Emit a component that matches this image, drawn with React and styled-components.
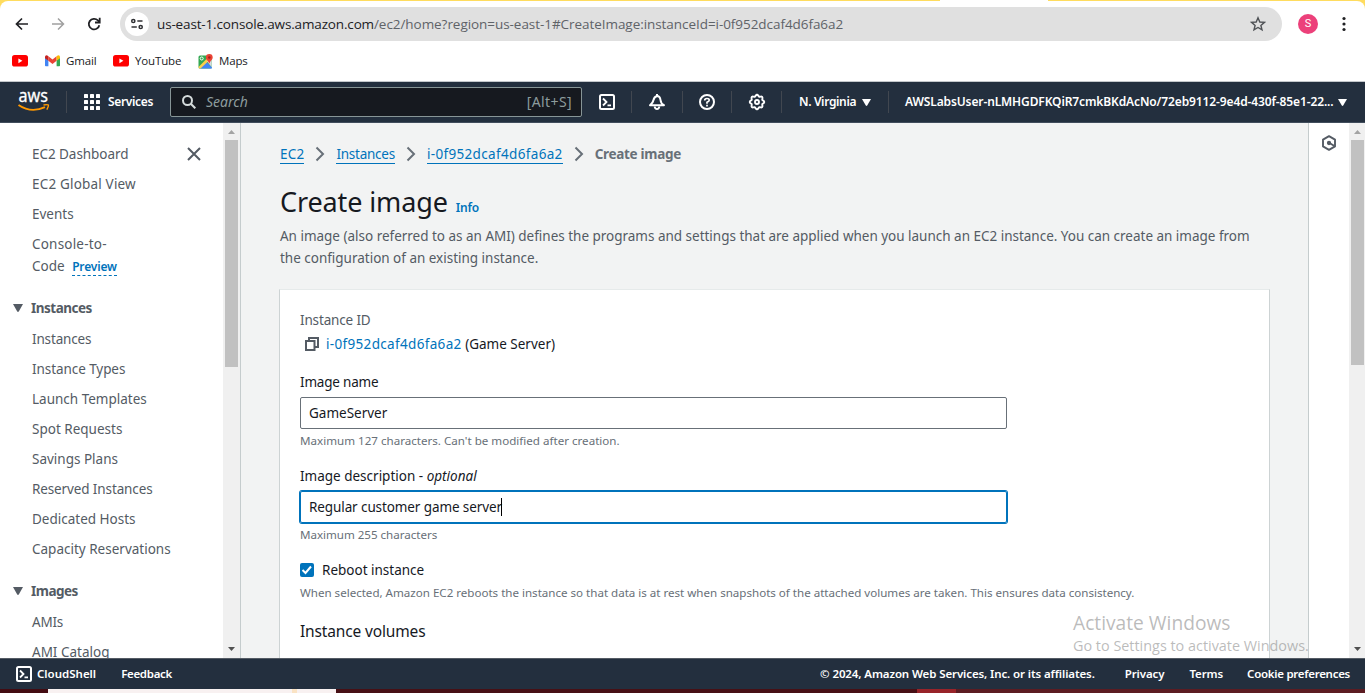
import React from "react";
import styled, { createGlobalStyle, css } from "styled-components";

const Global = createGlobalStyle`
  * { box-sizing: border-box; }
  html, body { margin: 0; padding: 0; overflow: hidden; }
  body {
    width: 1365px; height: 693px;
    font-family: "Noto Sans", "Open Sans", sans-serif;
    font-size: 14px; line-height: 22px; color: #16191f;
  }
`;

const ls = css`letter-spacing: ${(p) => p.$ls || 0}px;`;

const Page = styled.div`
  display: flex; flex-direction: column; width: 1365px; height: 693px; overflow: hidden; background: #fff;
  position: relative;
`;

/* Browser chrome */
const TabEdge = styled.div`
  height: 1px; flex: none;
  background: linear-gradient(to right, #ffdc5e 940px, #fff 940px, #fff 1048px, #ffdc5e 1048px);
`;
const ChromeBack = styled.div`background: #ffdc5e; flex: none;`;
const Chrome = styled.div`
  height: 80px; background: #fff; border-radius: 8px 8px 0 0;
  font-family: "Open Sans", "Noto Sans", sans-serif; color: #202124;
`;
const Toolbar = styled.div`display: flex; align-items: center; height: 46px; padding-left: 13px;`;
const ToolIcon = styled.svg`display: block; width: 18px; height: 18px; margin-right: 18px; flex: none;`;
const UrlBar = styled.div`
  display: flex; align-items: center; width: 1162px; height: 34px; border-radius: 17px; margin-left: -1px;
  background: #e0e0e0; padding: 0 16px 0 5px; font-size: 13.5px; color: #5f6368;
  & > svg { margin-left: auto; }
`;
const SiteInfo = styled.span`
  display: flex; align-items: center; justify-content: center; width: 24px; height: 24px;
  background: #fff; border-radius: 50%; margin-right: 8px; flex: none;
`;
const Host = styled.span`color: #202124; letter-spacing: -0.15px;`;
const Path = styled.span`letter-spacing: -0.055px;`;
const Avatar = styled.div`
  width: 20px; height: 20px; border-radius: 50%; background: #ec407a; color: #fff;
  font: 11px/20px Roboto, sans-serif; text-align: center; margin-left: 16px;
`;
const Dots = styled.svg`width: 4px; height: 16px; margin-left: 24px;`;
const Bookmarks = styled.div`display: flex; align-items: center; height: 28px; padding-left: 12px;`;
const Bookmark = styled.div`
  display: flex; align-items: center; font-size: 11.5px; letter-spacing: -0.15px;
  gap: 6px; width: ${(p) => p.$w}px; flex: none; white-space: nowrap;
`;

/* Console navigation */
const Nav = styled.div`
  display: flex; align-items: center; flex: none; height: 42px; background: #232f3e;
  border-top: 1px solid #c3c7cb; border-bottom: 1px solid #414d5c; color: #fff;
  font-size: 12px; font-weight: 600;
`;
const NavItem = styled.div`
  display: flex; align-items: center; flex: none; height: 22px; width: ${(p) => p.$w}px;
  padding-left: ${(p) => p.$pl || 0}px; justify-content: ${(p) => (p.$center ? "center" : "flex-start")};
  border-right: ${(p) => (p.$line ? "1px solid #414750" : "0")}; white-space: nowrap; gap: ${(p) => p.$gap || 0}px;
  & > svg { flex: none; overflow: visible; }
`;
const NavText = styled.span`${ls}`;
const Search = styled.div`
  display: flex; align-items: center; width: 412px; height: 30px; flex: none; background: #16191f;
  border: 1px solid #879596; border-radius: 2px; padding: 0 9px 0 11px; gap: 10px;
  font-size: 14px; font-weight: 400; color: #8d9c9d;
`;
const Placeholder = styled.em`flex: 1; ${ls}`;

/* Body */
const Body = styled.div`display: flex; height: 535px; flex: none;`;
const Side = styled.div`
  width: 223px; height: 535px; overflow: hidden; padding: 16px 0 0 32px; color: #545b64; flex: none; position: relative;
`;
const SideLink = styled.div`padding: 4px 0; font-size: 13.5px; white-space: nowrap; ${ls}`;
const Preview = styled.span`
  color: #0073bb; font-size: 12px; font-weight: 600; border-bottom: 1px dashed #0073bb; margin-left: 4px;
  line-height: 17px; display: inline-block; ${ls}
`;
const SideHead = styled.div`
  display: flex; align-items: center; gap: 8px; margin: 16px 0 5px -19px; font-size: 13.5px; font-weight: 700; height: 22px;
  letter-spacing: -0.5px;
`;
const CloseIcon = styled.svg`position: absolute; left: 187px; top: 24px;`;
const Scroll = styled.div`
  display: flex; flex-direction: column; align-items: center; flex: none; width: ${(p) => p.$w}px; height: 535px;
  background: #f0f0f0; padding-top: 7px; padding-bottom: 7px;
`;
const Thumb = styled.div`width: 13px; height: ${(p) => p.$h}px; background: #c1c1c1; margin-top: 6px;`;
const Arrow = styled.svg`display: block; flex: none; margin-top: ${(p) => (p.$end ? "auto" : "0")};`;

const Main = styled.div`
  width: 1069px; flex: none; background: #f2f3f3; border-left: 1px solid #c5cccd; border-right: 1px solid #c5cccd;
  height: 535px; overflow: hidden; padding: 20px 38px 0 38px;
`;
const Crumbs = styled.div`display: flex; align-items: center; height: 22px; font-size: 13.5px; white-space: nowrap; padding-left: 1px;`;
const Crumb = styled.span`
  color: #0073bb; line-height: 18px; border-bottom: 1px solid #0073bb; margin-right: 11px; ${ls}
`;
const CrumbArrow = styled.svg`margin-right: 11px; flex: none;`;
const CrumbNow = styled.span`color: #687078; font-weight: 700; ${ls}`;
const TitleRow = styled.div`display: flex; align-items: baseline; height: 36px; margin: 19px 0 0 1px; white-space: nowrap;`;
const Title = styled.h1`margin: 0; font-size: 27px; font-weight: 400; line-height: 36px; ${ls}`;
const Info = styled.span`color: #0073bb; font-size: 12px; font-weight: 600; margin-left: 8px; ${ls}`;
const Lead = styled.div`color: #545b64; font-size: 13.5px; margin: 5px 0 0 1px; white-space: nowrap; ${ls}`;
const Card = styled.div`
  margin-top: 20px; height: 420px; background: #fff; border: 1px solid #cdd3d4; border-top-color: #e6eaea; padding: 19px 20px 0;
`;
const Label = styled.div`
  font-size: 13.5px; height: 22px; white-space: nowrap; color: ${(p) => (p.$muted ? "#545b64" : "#16191f")};
  margin-top: ${(p) => p.$mt || 0}px; display: flex; align-items: center; ${ls}
`;
const Text = styled.span`white-space: pre; ${ls}`;
const Link = styled(Text)`color: #0073bb;`;
const Field = styled.div`
  display: flex; align-items: center; width: 707px; height: 32px; margin-top: 4px; padding-left: 8px;
  border: 1px solid ${(p) => (p.$focus ? "#0073bb" : "#687078")}; border-radius: 2px; font-size: 13.5px;
  box-shadow: ${(p) => (p.$focus ? "0 0 0 1px #0073bb" : "none")};
`;
const Caret = styled.span`width: 1px; height: 18px; background: #000; margin-left: -1px;`;
const Hint = styled.div`font-size: 11.6px; line-height: 18px; height: 18px; margin-top: 3px; color: #687078; white-space: nowrap; ${ls}`;
const Check = styled.span`
  width: 14px; height: 14px; background: #0073bb; border-radius: 2px; margin-right: 8px; display: flex;
`;
const Section = styled.div`font-size: 15.5px; line-height: 22px; margin-top: 18px; ${ls}`;
const Tools = styled.div`width: 40px; flex: none; padding: 12px 0 0 12px;`;

/* Footer */
const Footer = styled.div`
  display: flex; align-items: center; height: 31px; flex: none; background: #232f3e; border-top: 1px solid #545b64;
  color: #fff; font-size: 11.5px; font-weight: 600; padding: 0 15px 0 16px; white-space: nowrap;
`;
const FootText = styled.span`margin-left: ${(p) => p.$ml}; ${ls}`;
const Taskbar = styled.div`
  height: 4px; flex: none;
  background: linear-gradient(to right, #430c12 48px, #f8f1f1 48px 292px, #fae3c4 292px 297px, #f8f1f1 297px 336px, #471015 336px 917px, #982329 917px 956px, #5c1c22 956px);
`;
const Watermark = styled.div`
  position: absolute; left: 1073px; top: 609px; color: rgba(120,120,120,0.5); font-family: "Open Sans", sans-serif;
  white-space: nowrap;
`;
const WmTitle = styled.div`font-size: 19.2px; line-height: 28px; ${ls}`;
const WmText = styled.div`font-size: 14.4px; line-height: 18px; ${ls}`;

const YouTube = () => (
  <svg width="16" height="12" viewBox="0 0 16 12"><rect width="16" height="11.5" rx="2.6" fill="#f00" /><path d="M6.4 3.4v4.8l4-2.4z" fill="#fff" /></svg>
);
const Gmail = () => (
  <svg width="15" height="12" viewBox="0 0 15 12">
    <path d="M0 2v8.5q0 .8.8.8h2.6V5.2z" fill="#4285f4" />
    <path d="M15 2v8.5q0 .8-.8.8h-2.6V5.2z" fill="#34a853" />
    <path d="M3.4 1.3v4.5L7.5 8.9l4.1-3.1V1.3L7.5 4.4z" fill="#ea4335" />
    <path d="M0 1.8Q.2-.2 2.3.4l1.1.9v4.5L0 3.3z" fill="#c5221f" />
    <path d="M15 1.8Q14.8-.2 12.7.4l-1.1.9v4.5L15 3.3z" fill="#fbbc04" />
  </svg>
);
const Maps = () => (
  <svg width="15" height="15" viewBox="0 0 15 15">
    <rect x=".5" y="1.5" width="13" height="13" rx="1.5" fill="#34a853" />
    <path d="M1 14.5 8 7.5l6 6v1z" fill="#4285f4" />
    <path d="M.5 13 9 4.5l2 2-8.5 8H1z" fill="#fbd04b" />
    <path d="M9 7.5 13.500 5v8z" fill="#d7dbe0" />
    <circle cx="3.7" cy="4.5" r="1.5" fill="none" stroke="#fff" />
    <path d="M11.3 0a3.4 3.4 0 0 1 3.4 3.4c0 2.2-2.5 3.3-3.4 6.300C10.4 6.7 7.900 5.600 7.900 3.400A3.400 3.400 0 0 1 11.300 0z" fill="#ea4335" />
    <circle cx="11.3" cy="3.5" r="1.2" fill="#a11f18" />
  </svg>
);
const Shell = () => (
  <svg width="16" height="16" viewBox="0 0 16 16" fill="none" stroke="#fff" strokeWidth="2">
    <rect x="1" y="1" width="14" height="14" rx="1.5" /><path d="M4 4.5 7.5 8 4 11.500M8.500 11.300h3.500" strokeWidth="1.8" />
  </svg>
);
const Down = ({ w = 9, h = 7, color = "#fff" }) => (
  <svg width={w} height={h} viewBox="0 0 9 7"><path d="M0 0h9L5.2 6.6q-.7.8-1.4 0z" fill={color} /></svg>
);
const Chevron = () => (
  <CrumbArrow width="10" height="16" viewBox="0 0 10 16" fill="none" stroke="#687078" strokeWidth="2"><path d="M1.5 1.5 8 8l-6.5 6.5" /></CrumbArrow>
);
const ScrollBar = ({ w, h }) => (
  <Scroll $w={w}>
    <Arrow width="7" height="4" viewBox="0 0 7 4"><path d="M0 4h7L3.5 0z" fill="#a3a3a3" /></Arrow>
    <Thumb $h={h} />
    <Arrow $end width="7" height="4" viewBox="0 0 7 4"><path d="M0 0h7L3.5 4z" fill="#505050" /></Arrow>
  </Scroll>
);

/* Scalloped outline of the settings icon: eight lobes around the centre */
const gearPath = Array.from({ length: 65 }, (_, i) => {
  const a = (i / 64) * Math.PI * 2;
  const r = 6.5 + 0.75 * Math.cos(8 * a);
  return `${i ? "L" : "M"}${(9 + r * Math.cos(a)).toFixed(2)} ${(9 + r * Math.sin(a)).toFixed(2)}`;
}).join("") + "Z";

export default function App() {
  return (
    <Page>
      <Global />
      <TabEdge />
      <ChromeBack>
        <Chrome>
          <Toolbar>
            <ToolIcon viewBox="0 0 18 18" fill="none" stroke="#202124" strokeWidth="1.7"><path d="M15 9H4M9 3.5 3.5 9 9 14.5" /></ToolIcon>
            <ToolIcon viewBox="0 0 18 18" fill="none" stroke="#a0a0a0" strokeWidth="1.5"><path d="M3 9h11M9 3.5 14.5 9 9 14.5" /></ToolIcon>
            <ToolIcon viewBox="0 0 18 18" fill="none" stroke="#202124" strokeWidth="1.8"><path d="M14.3 10.2A5.3 5.3 0 1 1 12.9 5.4L14.5 7" /><path d="M14.7 2.8v4.7h-4.7" /></ToolIcon>
            <UrlBar>
              <SiteInfo>
                <svg width="14" height="14" viewBox="0 0 14 14" fill="none" stroke="#303134" strokeWidth="1.5">
                  <circle cx="3.3" cy="4" r="1.6" /><path d="M7.3 4H12.5" /><circle cx="10.7" cy="10" r="1.6" /><path d="M1.5 10h5.3" />
                </svg>
              </SiteInfo>
              <Host>us-east-1.console.aws.amazon.com</Host><Path>/ec2/home?region=us-east-1#CreateImage:instanceId=i-0f952dcaf4d6fa6a2</Path>
              <svg width="16" height="16" viewBox="0 0 16 16" fill="none" stroke="#4f5256" strokeWidth="1.4">
                <path d="M8 1.8 9.8 6l4.6.4-3.5 3 1.1 4.5L8 11.500l-4 2.400 1.100-4.500-3.500-3L6.200 6z" />
              </svg>
            </UrlBar>
            <Avatar>S</Avatar>
            <Dots viewBox="0 0 4 16" fill="#202124"><circle cx="2" cy="2.5" r="1.6" /><circle cx="2" cy="8" r="1.6" /><circle cx="2" cy="13.5" r="1.6" /></Dots>
          </Toolbar>
          <Bookmarks>
            <Bookmark $w={33}><YouTube /></Bookmark>
            <Bookmark $w={68}><Gmail />Gmail</Bookmark>
            <Bookmark $w={85}><YouTube />YouTube</Bookmark>
            <Bookmark $w={60}><Maps />Maps</Bookmark>
          </Bookmarks>
        </Chrome>
      </ChromeBack>
      <Nav>
        <NavItem $w={67} $pl={18} $line>
          <svg width="32" height="22" viewBox="0 0 32 22">
            <text x="0.5" y="11" fontSize="18" fontFamily="Noto Sans" fontWeight="400" fill="#fff" stroke="#fff" strokeWidth=".3" textLength="29.5" lengthAdjust="spacingAndGlyphs">aws</text>
            <path d="M.5 14Q13 22.500 27 16.200" fill="none" stroke="#f90" strokeWidth="1.9" />
            <path d="M25.500 14q4.300-.8 4.800 0t-1.500 4.700" fill="none" stroke="#f90" strokeWidth="1.5" />
          </svg>
        </NavItem>
        <NavItem $w={103} $pl={17} $gap={8}>
          <svg width="16" height="16" viewBox="0 0 16 16" fill="#fff">
            {[0, 6, 12].map((y) => [0, 6, 12].map((x) => <rect key={x + "-" + y} x={x} y={y} width="4" height="4" rx=".6" />))}
          </svg>
          <NavText $ls={-0.35}>Services</NavText>
        </NavItem>
        <Search>
          <svg width="14" height="14" viewBox="0 0 14 14" fill="none" stroke="#d5dbdb" strokeWidth="2"><circle cx="5.5" cy="5.5" r="4.5" /><path d="m8.8 8.8 4.5 4.5" /></svg>
          <Placeholder>Search</Placeholder>
          <Text $ls={0.4}>[Alt+S]</Text>
        </Search>
        <NavItem $w={50} $center $line><Shell /></NavItem>
        <NavItem $w={51} $center $line>
          <svg width="18" height="18" viewBox="0 0 18 18" fill="none" stroke="#fff" strokeWidth="2" strokeLinejoin="round"><path d="M2 12.2Q5 10 5.500 7T9 3q3 0 3.500 4T16 12.200z" /><path d="M9 3V1M6.700 13.500Q7 16 9 16t2.300-2.500" /></svg>
        </NavItem>
        <NavItem $w={49} $center $line>
          <svg width="16" height="16" viewBox="0 0 16 16" fill="none" stroke="#fff" strokeWidth="2"><circle cx="8" cy="8" r="7" /><path d="M5.700 6.500Q5.700 4.500 8 4.500T10.200 6.300Q10.200 7.300 8 8.300v1.500M8 10.800v1.700" strokeWidth="1.7" /></svg>
        </NavItem>
        <NavItem $w={50} $center $line>
          <svg width="18" height="18" viewBox="0 0 18 18" fill="none" stroke="#fff" strokeWidth="1.9" strokeLinejoin="round">
            <path d={gearPath} /><circle cx="9" cy="9" r="2" />
          </svg>
        </NavItem>
        <NavItem $w={107} $pl={17} $gap={6} $line><NavText $ls={-0.35}>N. Virginia</NavText><Down /></NavItem>
        <NavItem $w={460} $pl={16} $gap={5}><NavText $ls={-0.12}>AWSLabsUser-nLMHGDFKQiR7cmkBKdAcNo/72eb9112-9e4d-430f-85e1-22...</NavText><Down /></NavItem>
      </Nav>
      <Body>
        <Side>
          <CloseIcon width="14" height="14" viewBox="0 0 14 14" stroke="#545b64" strokeWidth="2"><path d="m1 1 12 12M13 1 1 13" /></CloseIcon>
          <SideLink $ls={-0.05}>EC2 Dashboard</SideLink>
          <SideLink $ls={0.18}>EC2 Global View</SideLink>
          <SideLink>Events</SideLink>
          <SideLink><Text $ls={0.2}>Console-to-</Text><br />Code <Preview $ls={-0.15}>Preview</Preview></SideLink>
          <SideHead><Down w={10} h={8} color="#545b64" />Instances</SideHead>
          <SideLink $ls={-0.15}>Instances</SideLink>
          <SideLink $ls={-0.07}>Instance Types</SideLink>
          <SideLink>Launch Templates</SideLink>
          <SideLink>Spot Requests</SideLink>
          <SideLink>Savings Plans</SideLink>
          <SideLink $ls={-0.12}>Reserved Instances</SideLink>
          <SideLink>Dedicated Hosts</SideLink>
          <SideLink>Capacity Reservations</SideLink>
          <SideHead><Down w={10} h={8} color="#545b64" />Images</SideHead>
          <SideLink $ls={-0.2}>AMIs</SideLink>
          <SideLink>AMI Catalog</SideLink>
        </Side>
        <ScrollBar w={17} h={227} />
        <Main>
          <Crumbs>
            <Crumb $ls={0.2}>EC2</Crumb><Chevron />
            <Crumb $ls={-0.25}>Instances</Crumb><Chevron />
            <Crumb $ls={0.34}>i-0f952dcaf4d6fa6a2</Crumb><Chevron />
            <CrumbNow $ls={-0.3}>Create image</CrumbNow>
          </Crumbs>
          <TitleRow><Title $ls={-0.12}>Create image</Title><Info $ls={-0.2}>Info</Info></TitleRow>
          <Lead $ls={-0.014}>
            An image (also referred to as an AMI) defines the programs and settings that are applied when you launch an EC2 instance. You can create an image from<br />
            the configuration of an existing instance.
          </Lead>
          <Card>
            <Label $muted $ls={-0.15}>Instance ID</Label>
            <Label $mt={2}>
              <svg width="26" height="14" viewBox="0 0 26 14" fill="none" stroke="#545b64" strokeWidth="2"><path d="M6 4h8.500v9H6zM9 4V1h9v9h-3" /></svg>
              <Link $ls={0.33}>i-0f952dcaf4d6fa6a2</Link><Text> (Game Server)</Text>
            </Label>
            <Label $mt={16} $ls={-0.2}>Image name</Label>
            <Field><Text>GameServer</Text></Field>
            <Hint>Maximum 127 characters. Can't be modified after creation.</Hint>
            <Label $mt={15}><Text>Image description - <em>optional</em></Text></Label>
            <Field $focus><Text $ls={-0.1}>Regular customer game server</Text><Caret /></Field>
            <Hint $ls={-0.03}>Maximum 255 characters</Hint>
            <Label $mt={15}>
              <Check><svg width="14" height="14" viewBox="0 0 14 14" fill="none" stroke="#fff" strokeWidth="2"><path d="m2.5 7 3 3 5.5-6.5" /></svg></Check>
              Reboot instance
            </Label>
            <Hint $ls={-0.015}>When selected, Amazon EC2 reboots the instance so that data is at rest when snapshots of the attached volumes are taken. This ensures data consistency.</Hint>
            <Section $ls={-0.15}>Instance volumes</Section>
          </Card>
        </Main>
        <Tools>
          <svg width="16" height="16" viewBox="0 0 16 16" fill="none" stroke="#545b64" strokeWidth="1.9" strokeLinejoin="round"><path d="M8 1.200 14 4.600v6.800l-6 3.400-6-3.400V4.600z" /><circle cx="8" cy="8" r="1.2" fill="#545b64" /><path d="m8.500 8 4.500 2.800" /></svg>
        </Tools>
        <ScrollBar w={16} h={225} />
      </Body>
      <Footer>
        <Shell />
        <FootText $ml="5px">CloudShell</FootText>
        <FootText $ml="25px" $ls={-0.3}>Feedback</FootText>
        <FootText $ml="auto" $ls={-0.11}>© 2024, Amazon Web Services, Inc. or its affiliates.</FootText>
        <FootText $ml="30px" $ls={-0.1}>Privacy</FootText>
        <FootText $ml="25px" $ls={-0.1}>Terms</FootText>
        <FootText $ml="24px" $ls={-0.28}>Cookie preferences</FootText>
      </Footer>
      <Taskbar />
      <Watermark>
        <WmTitle>Activate Windows</WmTitle>
        <WmText>Go to Settings to activate Windows.</WmText>
      </Watermark>
    </Page>
  );
}
